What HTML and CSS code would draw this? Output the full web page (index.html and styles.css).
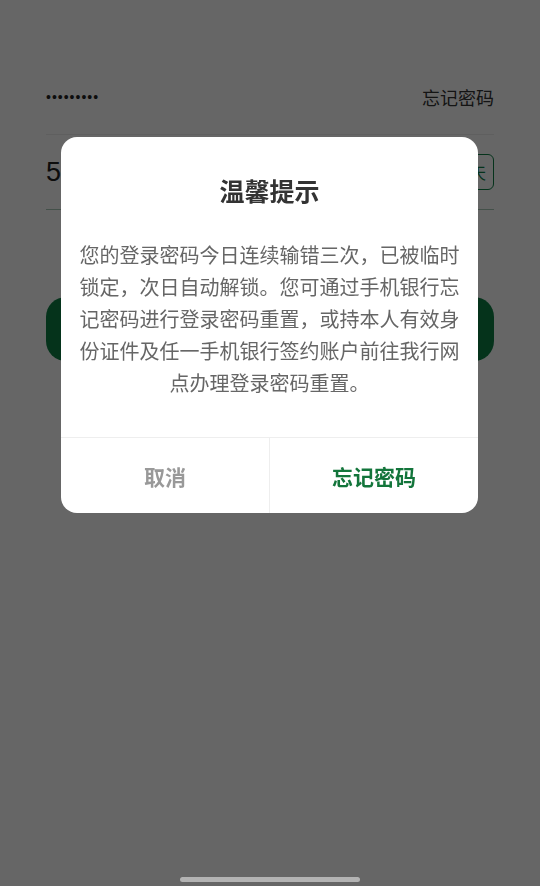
FILE: index.html
```html
<!DOCTYPE html>
<html lang="zh-CN">
  <head>
    <meta charset="utf-8" />
    <title>登录</title>
    <link rel="stylesheet" href="styles.css">
  </head>
<body>

<div class="page">
  <div class="row row-pwd">
    <span class="dots">•••••••••</span>
    <span class="forget">忘记密码</span>
  </div>
  <div class="row row-code">
    <span class="code">52</span>
    <span class="code-btn">重发59天</span>
  </div>
  <div class="login"></div>
</div>

<div class="mask">
  <div class="dialog">
    <h3>温馨提示</h3>
    <p>您的登录密码今日连续输错三次，已被临时锁定，次日自动解锁。您可通过手机银行忘记密码进行登录密码重置，或持本人有效身份证件及任一手机银行签约账户前往我行网点办理登录密码重置。</p>
    <div class="btns">
      <a href="#" class="cancel">取消</a>
      <a href="#" class="ok">忘记密码</a>
    </div>
  </div>
</div>

<div class="home-bar"></div>

</body>
</html>
```

FILE: styles.css
```css
body {
    margin: 0;
    font-family: "Noto Sans CJK SC", "Noto Sans", sans-serif;
    background: #fff;
    width: 540px;
    height: 886px;
    overflow: hidden;
}
.page {
    padding: 60px 46px 0;
}
.row {
    display: flex;
    align-items: center;
    justify-content: space-between;
}
.row-pwd {
    height: 74px;
    border-bottom: 1px solid #eee;
}
.dots {
    font-family: "Liberation Sans", sans-serif;
    font-size: 14px;
    letter-spacing: 1px;
    color: #222;
}
.forget {
    font-size: 18px;
    color: #333;
}
.row-code {
    height: 74px;
    border-bottom: 1px solid #a9c9b6;
}
.code {
    font-family: "Liberation Sans", sans-serif;
    font-size: 27px;
    color: #222;
}
.code-btn {
    border: 1px solid #0d8045;
    border-radius: 6px;
    height: 34px;
    line-height: 34px;
    padding: 0 7px;
    font-size: 16px;
    color: #0d8045;
}
.login {
    margin-top: 87px;
    height: 64px;
    border-radius: 20px;
    background: #0d8045;
}
.mask {
    position: fixed;
    left: 0;
    top: 0;
    right: 0;
    bottom: 0;
    background: rgba(0, 0, 0, 0.6);
    display: flex;
    align-items: flex-start;
    padding: 137px 0 0 61px;
}
.dialog {
    width: 417px;
    background: #fff;
    border-radius: 16px;
    overflow: hidden;
}
.dialog h3 {
    margin: 37px 0 0;
    font-size: 25px;
    line-height: 32px;
    font-weight: 600;
    color: #333;
    text-align: center;
}
.dialog p {
    margin: 33px auto 38px;
    width: 380px;
    font-size: 20px;
    line-height: 32px;
    color: #666;
    text-align: center;
}
.btns {
    display: flex;
    border-top: 1px solid #eee;
    height: 75px;
}
.btns a {
    flex: 1;
    display: flex;
    align-items: center;
    justify-content: center;
    font-size: 21px;
    font-weight: 600;
    text-decoration: none;
}
.cancel {
    color: #999;
    border-right: 1px solid #eee;
}
.ok {
    color: #13753b;
}
.home-bar {
    position: fixed;
    left: 180px;
    bottom: 4px;
    width: 180px;
    height: 5px;
    border-radius: 3px;
    background: #b3b3b3;
}
```
